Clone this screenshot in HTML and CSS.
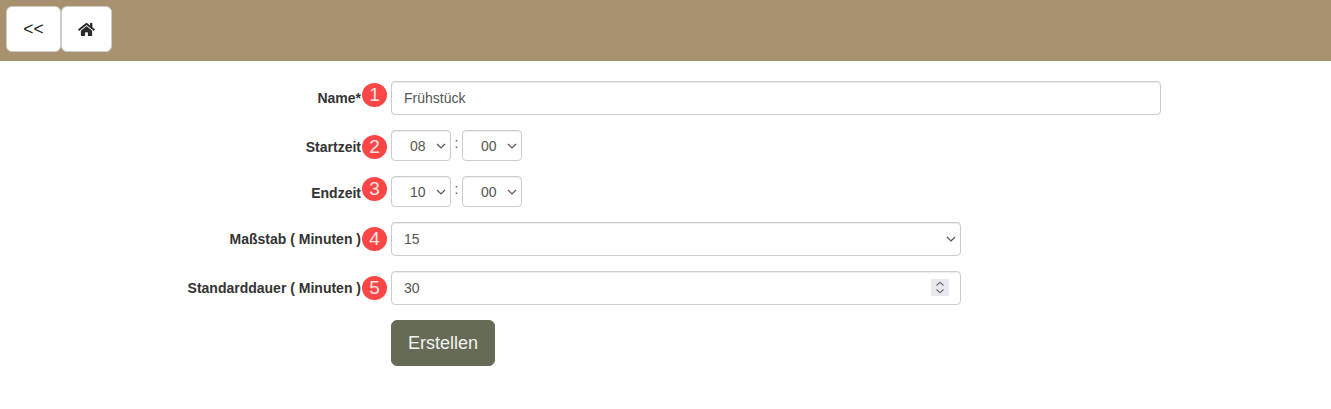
FILE: index.html
```html
<!DOCTYPE html>
<html lang="de">
<head>
<meta charset="utf-8">
<title>Erstellen</title>
<link rel="stylesheet" href="styles.css">
</head>
<body>
<header class="topbar">
  <button class="nav-btn nav-back" type="button">&lt;&lt;</button>
  <button class="nav-btn nav-home" type="button" aria-label="Home">
    <svg class="home-icon" viewBox="0 0 576 512"><path d="M280.37 148.26L96 300.11V464a16 16 0 0 0 16 16l112.06-.29a16 16 0 0 0 15.92-16V368a16 16 0 0 1 16-16h64a16 16 0 0 1 16 16v95.64a16 16 0 0 0 16 16.05L464 480a16 16 0 0 0 16-16V300L295.67 148.26a12.19 12.19 0 0 0-15.3 0zM571.6 251.47L488 182.56V44.05a12 12 0 0 0-12-12h-56a12 12 0 0 0-12 12v72.61L318.47 43a48 48 0 0 0-61 0L4.34 251.47a12 12 0 0 0-1.6 16.9l25.5 31A12 12 0 0 0 45.15 301l235.22-193.74a12.19 12.19 0 0 1 15.3 0L530.9 301a12 12 0 0 0 16.9-1.6l25.5-31a12 12 0 0 0-1.7-16.93z"/></svg>
  </button>
</header>
<form class="form">
  <div class="row">
    <label class="label">Name*</label>
    <span class="badge badge-high">1</span>
    <input class="control control-full" type="text" value="Frühstück">
  </div>
  <div class="row row-time">
    <label class="label">Startzeit</label>
    <span class="badge badge-low">2</span>
    <select class="control time"><option>08</option></select>
    <span class="colon">:</span>
    <select class="control time"><option>00</option></select>
  </div>
  <div class="row row-time">
    <label class="label">Endzeit</label>
    <span class="badge badge-mid">3</span>
    <select class="control time"><option>10</option></select>
    <span class="colon">:</span>
    <select class="control time"><option>00</option></select>
  </div>
  <div class="row">
    <label class="label">Maßstab ( Minuten )</label>
    <span class="badge">4</span>
    <select class="control control-wide"><option>15</option></select>
  </div>
  <div class="row">
    <label class="label">Standarddauer ( Minuten )</label>
    <span class="badge">5</span>
    <div class="number-wrap">
      <input class="control control-wide" type="text" value="30">
      <span class="spinner">
        <svg viewBox="0 0 18 17"><path class="spin-line" d="M5.5 6.5L9 3.2l3.5 3.3M5.5 10.5L9 13.8l3.5-3.3"/></svg>
      </span>
    </div>
  </div>
  <div class="row">
    <span class="label"></span>
    <span class="badge-space"></span>
    <button class="submit" type="button">Erstellen</button>
  </div>
</form>
</body>
</html>
```
FILE: styles.css
```css
* { box-sizing: border-box; }

body {
  margin: 0;
  background: #fff;
  font-family: "Liberation Sans", Arial, sans-serif;
  font-size: 14px;
  color: #333;
}

.topbar {
  display: flex;
  height: 61px;
  padding: 6px;
  background: #a8916f;
  align-items: flex-start;
}

.nav-btn {
  display: flex;
  align-items: center;
  justify-content: center;
  height: 46px;
  padding: 0;
  background: #fff;
  border: 1px solid #ccc;
  border-radius: 6px;
  font-family: inherit;
  font-size: 17.5px;
  color: #212529;
}

.nav-back { width: 55px; }
.nav-home { width: 51px; }

.home-icon {
  display: block;
  width: 17px;
  height: 15px;
  fill: #2b2b2b;
}

.form {
  display: flex;
  flex-direction: column;
  gap: 15px;
  padding-top: 20px;
}

.row {
  display: flex;
  align-items: center;
}

.label {
  width: 361px;
  flex: none;
  text-align: right;
  font-weight: 700;
  color: #333;
}

.row-time .label { margin-top: 2px; }

.badge, .badge-space {
  width: 25px;
  height: 24px;
  margin-left: 1px;
  margin-right: 4px;
  flex: none;
}

.badge {
  display: flex;
  align-items: center;
  justify-content: center;
  border-radius: 50%;
  background: #ff4646;
  color: #f6e4e4;
  font-size: 19px;
}

.badge-high { margin-bottom: 6px; }
.badge-mid { margin-bottom: 5px; }
.badge-low { margin-top: 2px; }

.control {
  height: 34px;
  padding: 0 12px;
  background: #fff;
  border: 1px solid #ccc;
  border-radius: 4px;
  font-family: inherit;
  font-size: 14px;
  color: #555;
  box-shadow: inset 0 1px 1px rgba(0, 0, 0, .075);
  outline: none;
}

.control-full { width: 770px; }
.control-wide { width: 570px; }

select.control {
  appearance: none;
  background-image: url("data:image/svg+xml,%3Csvg xmlns='http://www.w3.org/2000/svg' width='10' height='6'%3E%3Cpath d='M1 1l4 4 4-4' fill='none' stroke='%23555' stroke-width='1.2'/%3E%3C/svg%3E");
  background-repeat: no-repeat;
  background-position: right 4px center;
}

.time {
  width: 60px;
  height: 31px;
  padding: 0 0 0 18px;
}

.row-time { height: 31px; }

.colon {
  width: 11px;
  margin-bottom: 5px;
  text-align: center;
  color: #555;
}

.number-wrap {
  position: relative;
  width: 570px;
  height: 34px;
}

.spinner {
  position: absolute;
  top: 8px;
  right: 12px;
  width: 18px;
  height: 17px;
  background: #e9e9ed;
}

.spinner svg {
  display: block;
  width: 18px;
  height: 17px;
}

.spin-line {
  fill: none;
  stroke: #6e6e76;
  stroke-width: 1.2;
}

.submit {
  width: 104px;
  height: 46px;
  padding: 0;
  background: #656b56;
  border: 1px solid #656b56;
  border-radius: 6px;
  font-family: inherit;
  font-size: 18px;
  color: #f2f2f2;
}
```
